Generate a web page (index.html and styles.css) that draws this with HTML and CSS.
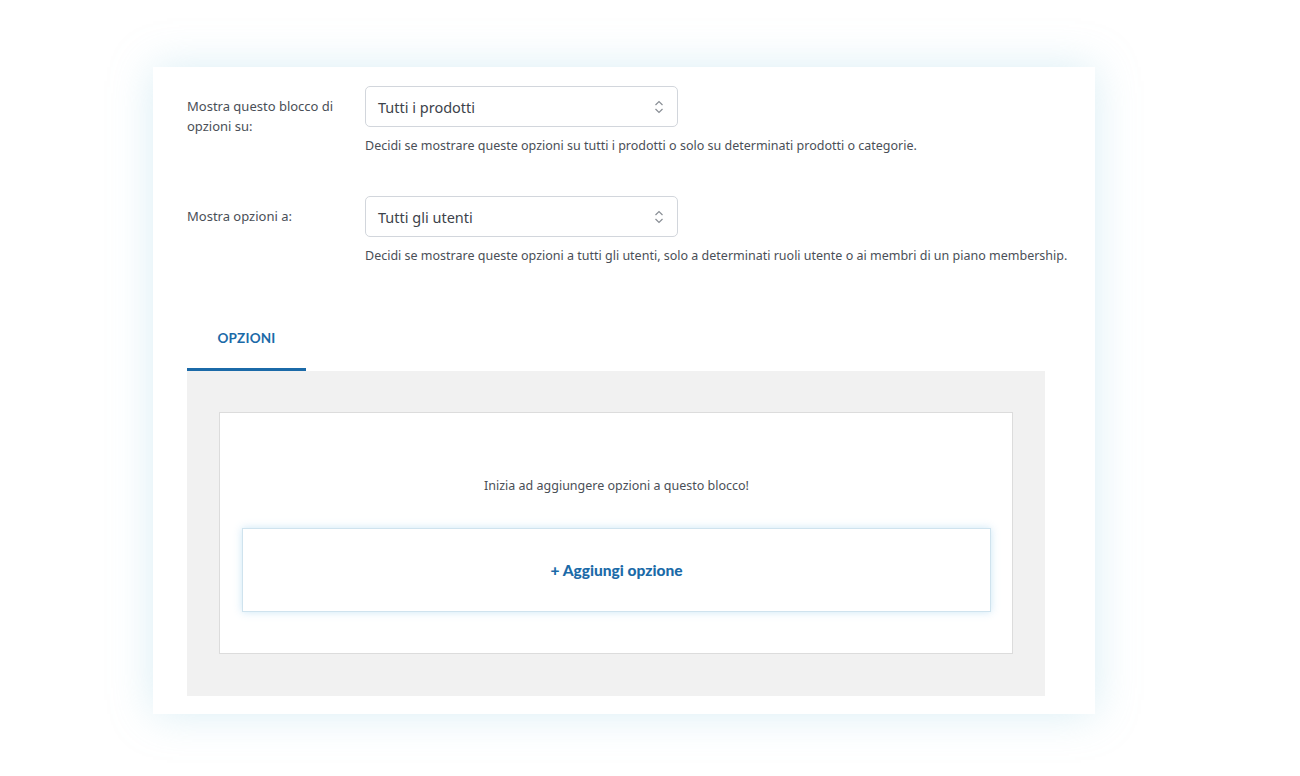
FILE: index.html
```html
<!DOCTYPE html>
<html lang="it">
<head>
    <meta charset="UTF-8">
    <title>Blocco opzioni</title>
    <link rel="stylesheet" href="styles.css">
</head>
<body>

    <!-- Block settings card -->
    <div class="card">
        <div class="field-row">
            <div class="field-label">Mostra questo blocco di opzioni su:</div>
            <div class="field-body">
                <div class="select">
                    <span>Tutti i prodotti</span>
                    <svg class="chevrons" width="10" height="14" viewBox="0 0 10 14"><path d="M1.5 5 L5 1.5 L8.5 5 M1.5 9 L5 12.5 L8.5 9" fill="none" stroke="#8a8f96" stroke-width="1.2"/></svg>
                </div>
                <p class="hint">Decidi se mostrare queste opzioni su tutti i prodotti o solo su determinati prodotti o categorie.</p>
            </div>
        </div>

        <div class="field-row">
            <div class="field-label">Mostra opzioni a:</div>
            <div class="field-body">
                <div class="select">
                    <span>Tutti gli utenti</span>
                    <svg class="chevrons" width="10" height="14" viewBox="0 0 10 14"><path d="M1.5 5 L5 1.5 L8.5 5 M1.5 9 L5 12.5 L8.5 9" fill="none" stroke="#8a8f96" stroke-width="1.2"/></svg>
                </div>
                <p class="hint">Decidi se mostrare queste opzioni a tutti gli utenti, solo a determinati ruoli utente o ai membri di un piano membership.</p>
            </div>
        </div>

        <!-- Tabs -->
        <div class="tabs">
            <div class="tab active">OPZIONI</div>
        </div>
        <div class="panel">
            <div class="empty-box">
                <p class="empty-text">Inizia ad aggiungere opzioni a questo blocco!</p>
                <div class="add-option">+ Aggiungi opzione</div>
            </div>
        </div>
    </div>

</body>
</html>
```

FILE: styles.css
```css
/* Global Styles */
body {
    margin: 0;
    padding: 0 0 62px 0;
    background-color: #ffffff;
    font-family: "Noto Sans", "Open Sans", sans-serif;
    color: #4a4f57;
}
.card {
    margin: 67px 0 0 153px;
    width: 942px;
    height: 647px;
    box-sizing: border-box;
    background-color: #fff;
    padding: 19px 50px 19px 34px;
    box-shadow: 0 0 40px rgba(150, 205, 225, 0.35);
}
.field-row {
    display: flex;
    margin-bottom: 40px;
}
.field-label {
    flex-shrink: 0;
    width: 178px;
    padding: 10px 30px 0 0;
    box-sizing: border-box;
    font-size: 13px;
    line-height: 20px;
    color: #4a4f57;
}
.field-body {
    flex: 1;
    min-width: 0;
}
.select {
    width: 313px;
    height: 41px;
    box-sizing: border-box;
    border: 1px solid #d2d6dc;
    border-radius: 5px;
    display: flex;
    align-items: center;
    justify-content: space-between;
    padding: 0 13px 0 12px;
    font-size: 14.5px;
    color: #3d434b;
}
.chevrons {
    display: block;
}
.hint {
    margin: 9px 0 0 0;
    font-size: 12.5px;
    line-height: 20px;
    white-space: nowrap;
    color: #4a4f57;
}
.tabs {
    display: flex;
    margin-top: 54px;
}
.tab {
    width: 119px;
    height: 51px;
    box-sizing: border-box;
    text-align: center;
    padding-top: 10px;
    font-family: "Lato", sans-serif;
    font-weight: bold;
    font-size: 13.5px;
    letter-spacing: 0.2px;
    color: #1b6aa8;
}
.tab.active {
    border-bottom: 3px solid #1b6aa8;
}
.panel {
    background-color: #f1f1f1;
    padding: 41px 32px 42px 32px;
}
.empty-box {
    background-color: #fff;
    border: 1px solid #dcdcdc;
    padding: 63px 21px 41px 22px;
}
.empty-text {
    margin: 0 0 32px 0;
    text-align: center;
    font-size: 12.5px;
    line-height: 20px;
    color: #4a4f57;
}
.add-option {
    height: 84px;
    box-sizing: border-box;
    border: 1px solid #cfe3ee;
    box-shadow: 0 0 8px rgba(140, 200, 235, 0.45);
    display: flex;
    align-items: center;
    justify-content: center;
    font-family: "Lato", sans-serif;
    font-weight: 900;
    font-size: 15.5px;
    color: #1b6aa8;
}
```
